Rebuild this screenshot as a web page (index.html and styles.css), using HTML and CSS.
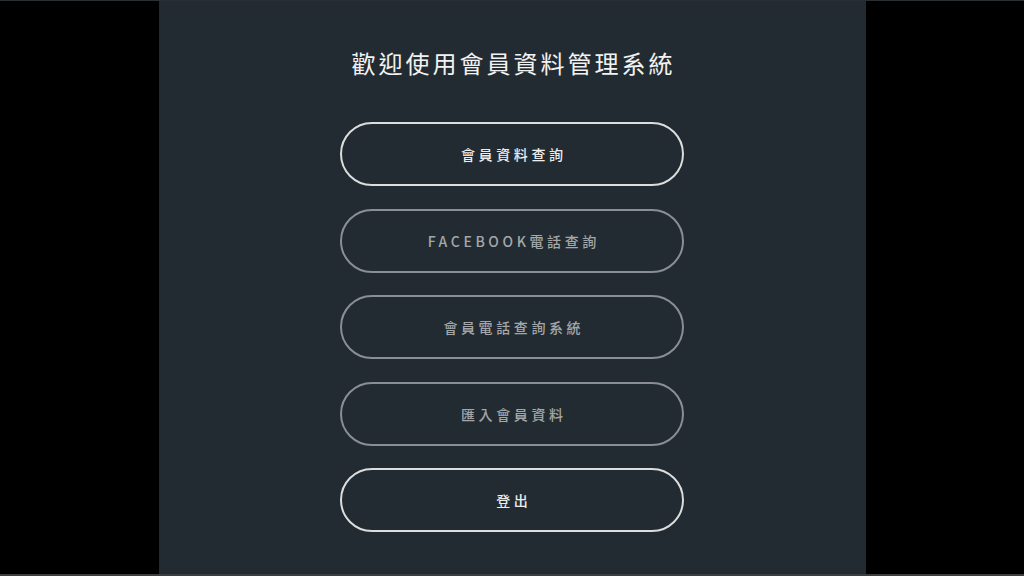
FILE: index.html
```html
<!DOCTYPE html>
<html lang="zh-Hant">
<head>
<meta charset="utf-8">
<title>會員資料管理系統</title>
<link rel="stylesheet" href="styles.css">
</head>
<body>
<div class="stage">
  <main class="panel">
    <h1 class="title">歡迎使用會員資料管理系統</h1>
    <nav class="menu">
      <a class="btn btn-on">會員資料查詢</a>
      <a class="btn btn-off">FACEBOOK電話查詢</a>
      <a class="btn btn-off">會員電話查詢系統</a>
      <a class="btn btn-off">匯入會員資料</a>
      <a class="btn btn-on">登出</a>
    </nav>
  </main>
</div>
</body>
</html>
```
FILE: styles.css
```css
html, body {
  margin: 0;
  padding: 0;
  height: 100%;
}
body {
  background: #000;
  font-family: "Noto Sans CJK TC", "Noto Sans", sans-serif;
  overflow: hidden;
}
.stage {
  height: 576px;
  display: flex;
  justify-content: center;
  box-sizing: border-box;
  border-top: 1px solid #2a2f33;
  border-bottom: 2px solid #3a3e41;
}
.panel {
  width: 707px;
  background: #222b31;
  display: flex;
  flex-direction: column;
  align-items: center;
}
.title {
  margin: 45px 0 0 0;
  font-size: 24px;
  line-height: 34px;
  font-weight: 400;
  letter-spacing: 3px;
  color: #f2f2f2;
  padding-left: 3px;
}
.menu {
  margin-top: 42px;
  display: flex;
  flex-direction: column;
  gap: 22.5px;
}
.btn {
  box-sizing: border-box;
  width: 344px;
  height: 64px;
  border-radius: 32px;
  display: flex;
  align-items: center;
  justify-content: center;
  font-size: 14px;
  font-weight: 500;
  letter-spacing: 3.6px;
  padding-left: 3.6px;
}
.btn-on {
  border: 2px solid #dcdddd;
  color: #ececec;
}
.btn-off {
  border: 2px solid #8a8f93;
  color: #a3a7a9;
}
```
